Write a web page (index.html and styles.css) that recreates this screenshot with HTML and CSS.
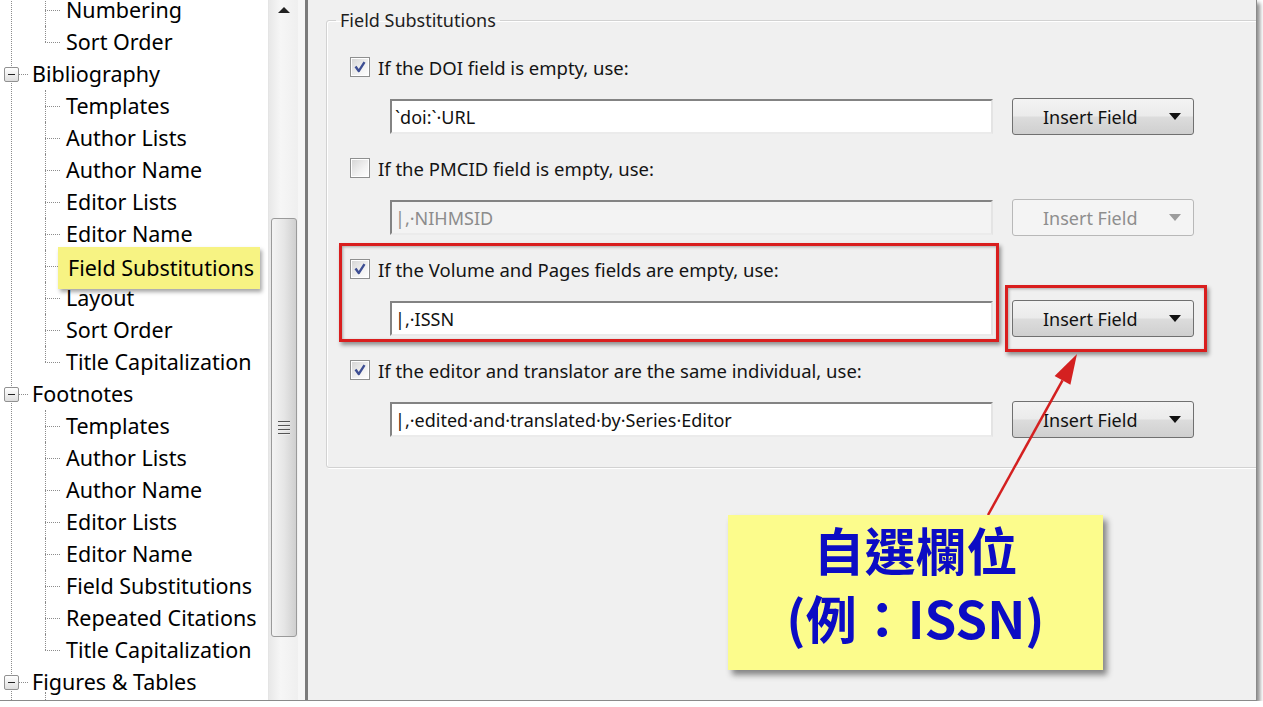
FILE: index.html
```html
<!DOCTYPE html>
<html lang="zh-Hant">
<head>
<meta charset="UTF-8">
<title>Field Substitutions</title>
<link rel="stylesheet" href="styles.css">
</head>
<body>
<div class="shot">
  <div class="tree-pane">
    <div class="tree">
      <div class="node child">Numbering</div>
      <div class="node child last">Sort Order</div>
      <div class="node parent"><span class="toggle"></span>Bibliography</div>
      <div class="node child">Templates</div>
      <div class="node child">Author Lists</div>
      <div class="node child">Author Name</div>
      <div class="node child">Editor Lists</div>
      <div class="node child">Editor Name</div>
      <div class="node child"><span class="hl">Field Substitutions</span></div>
      <div class="node child">Layout</div>
      <div class="node child">Sort Order</div>
      <div class="node child last">Title Capitalization</div>
      <div class="node parent"><span class="toggle"></span>Footnotes</div>
      <div class="node child">Templates</div>
      <div class="node child">Author Lists</div>
      <div class="node child">Author Name</div>
      <div class="node child">Editor Lists</div>
      <div class="node child">Editor Name</div>
      <div class="node child">Field Substitutions</div>
      <div class="node child">Repeated Citations</div>
      <div class="node child last">Title Capitalization</div>
      <div class="node parent open"><span class="toggle"></span>Figures &amp; Tables</div>
    </div>
    <div class="scrollbar">
      <span class="arrow-up"></span>
      <div class="thumb"><span class="grip"></span></div>
    </div>
  </div>
  <div class="splitter"></div>
  <div class="options">
    <fieldset class="group">
      <legend>Field Substitutions</legend>

      <div class="sub">
        <label class="opt"><span class="check"><svg viewBox="0 0 20 20"><path d="M5 9.5 L8.6 14.5 L15 4.5"/></svg></span>If the DOI field is empty, use:</label>
        <div class="field-row">
          <input class="field" type="text" value="`doi:`·URL">
          <button class="insert" type="button">Insert Field <span class="caret"></span></button>
        </div>
      </div>

      <div class="sub">
        <label class="opt"><span class="check"></span>If the PMCID field is empty, use:</label>
        <div class="field-row">
          <input class="field" type="text" value="|,·NIHMSID" disabled>
          <button class="insert" type="button" disabled>Insert Field <span class="caret"></span></button>
        </div>
      </div>

      <div class="sub">
        <label class="opt"><span class="check"><svg viewBox="0 0 20 20"><path d="M5 9.5 L8.6 14.5 L15 4.5"/></svg></span>If the Volume and Pages fields are empty, use:</label>
        <div class="field-row">
          <input class="field" type="text" value="|,·ISSN">
          <button class="insert" type="button">Insert Field <span class="caret"></span></button>
        </div>
      </div>

      <div class="sub">
        <label class="opt"><span class="check"><svg viewBox="0 0 20 20"><path d="M5 9.5 L8.6 14.5 L15 4.5"/></svg></span>If the editor and translator are the same individual, use:</label>
        <div class="field-row">
          <input class="field" type="text" value="|,·edited·and·translated·by·Series·Editor">
          <button class="insert" type="button">Insert Field <span class="caret"></span></button>
        </div>
      </div>
    </fieldset>
  </div>

  <!-- annotations drawn over the dialog -->
  <div class="mark mark-rule"></div>
  <div class="mark mark-button"></div>
  <svg class="pointer" viewBox="0 0 120 180">
    <line x1="18" y1="175" x2="92.5" y2="40.3"/>
    <polygon points="107,14 100.4,44.7 84.6,35.9"/>
  </svg>
  <div class="callout">
    <p>自選欄位</p>
    <p>(例：ISSN)</p>
  </div>
</div>
</body>
</html>
```

FILE: styles.css
```css
body {
    margin: 0;
    background-color: #fff;
    overflow: hidden;
}
.shot {
    position: relative;
    display: flex;
    width: 1256px;
    height: 700px;
    border-right: 1px solid #8a8a8a;
    border-bottom: 1px solid #8a8a8a;
    box-shadow: 3px 3px 4px rgba(0,0,0,0.45);
    overflow: hidden;
    font-family: "Noto Sans", "Open Sans", sans-serif;
    color: #141414;
}

/* tree on the left */
.tree-pane {
    display: flex;
    flex: none;
    width: 298px;
    height: 700px;
    background-color: #fff;
    overflow: hidden;
}
.tree {
    position: relative;
    width: 268px;
    margin-top: -6px;
    font-size: 21.5px;
    color: #000;
}
.tree::before {
    content: "";
    position: absolute;
    left: 11px;
    top: 0;
    bottom: -20px;
    border-left: 1px dotted #8c8c8c;
}
.node {
    position: relative;
    height: 32px;
    line-height: 32px;
    white-space: nowrap;
}
.node.parent {
    padding-left: 32px;
}
.node.parent::before {
    content: "";
    position: absolute;
    left: 18px;
    top: 16px;
    width: 10px;
    border-top: 1px dotted #8c8c8c;
}
.node.parent.open::after {
    content: "";
    position: absolute;
    left: 45px;
    top: 26px;
    height: 8px;
    border-left: 1px dotted #8c8c8c;
}
.node.child {
    padding-left: 66px;
}
.node.child::before {
    content: "";
    position: absolute;
    left: 45px;
    top: 16px;
    width: 15px;
    border-top: 1px dotted #8c8c8c;
}
.node.child::after {
    content: "";
    position: absolute;
    left: 45px;
    top: 0;
    height: 32px;
    border-left: 1px dotted #8c8c8c;
}
.node.child.last::after {
    height: 16px;
}
.toggle {
    position: absolute;
    left: 4px;
    top: 9px;
    width: 13px;
    height: 13px;
    border: 1px solid #919191;
    border-radius: 2px;
    background: linear-gradient(#ffffff, #dedede);
    z-index: 1;
}
.toggle::after {
    content: "";
    position: absolute;
    left: 3px;
    top: 6px;
    width: 7px;
    height: 1px;
    background-color: #222;
}
.hl {
    position: relative;
    top: 2px;
    display: inline-block;
    line-height: 32px;
    padding: 5px 6px 5px 10px;
    margin: -5px 0 -5px -8px;
    background-color: #f7f383;
    box-shadow: 2px 3px 4px rgba(0,0,0,0.35);
    z-index: 2;
}

/* scrollbar */
.scrollbar {
    display: flex;
    flex-direction: column;
    align-items: center;
    width: 30px;
    box-sizing: border-box;
    padding-top: 7px;
    border-left: 1px solid #e4e4e4;
    background: linear-gradient(90deg, #e8e8e8, #f6f6f6 40%, #efefef);
}
.arrow-up {
    width: 0;
    height: 0;
    border-left: 6px solid transparent;
    border-right: 6px solid transparent;
    border-bottom: 6px solid #222;
}
.thumb {
    display: flex;
    align-items: center;
    justify-content: center;
    width: 26px;
    height: 419px;
    margin-top: 205px;
    box-sizing: border-box;
    border: 1px solid #9a9a9a;
    border-radius: 3px;
    background: linear-gradient(90deg, #f4f4f4, #e6e6e6 50%, #cfcfcf);
}
.grip {
    width: 12px;
    height: 14px;
    background: repeating-linear-gradient(#555 0 1px, #eee 1px 2px, transparent 2px 4px);
}
.splitter {
    flex: none;
    width: 7px;
    background-color: #f6f6f6;
}

/* options on the right */
.options {
    flex: 1;
    padding-top: 8px;
    border-left: 3px solid #7b7b7b;
    background-color: #f0f0f0;
    overflow: hidden;
}
.group {
    margin: 0 -10px 0 18px;
    padding: 20px 0 29px 9px;
    min-width: 0;
    border: 1px solid #d2d2d2;
    border-radius: 3px;
    box-shadow: inset 1px 1px 0 #fff, 1px 1px 0 #fff;
}
.group legend {
    padding: 0 4px;
    font-size: 18px;
    line-height: 24px;
    color: #1e1e1e;
}
.sub {
    padding-left: 14px;
}
.sub + .sub {
    margin-top: 18px;
}
.opt {
    display: flex;
    align-items: center;
    gap: 8px;
    height: 30px;
    font-size: 18.5px;
}
.check {
    display: flex;
    width: 20px;
    height: 20px;
    box-sizing: border-box;
    border: 1px solid #8e8f8f;
    background: linear-gradient(135deg, #d4d4d4, #f2f2f2 60%, #ffffff);
    box-shadow: inset 0 0 0 1px #fff;
}
.check svg {
    width: 18px;
    height: 18px;
}
.check path {
    fill: none;
    stroke: #3d4e93;
    stroke-width: 2.6;
    stroke-linejoin: round;
}
.field-row {
    display: flex;
    align-items: center;
    gap: 19px;
    height: 37px;
    margin-top: 16px;
    padding-left: 40px;
}
.field {
    width: 603px;
    height: 35px;
    box-sizing: border-box;
    padding: 0 3px;
    border: 2px solid;
    border-color: #838383 #e4e4e4 #ebebeb #838383;
    background-color: #fff;
    font-family: "Noto Sans", sans-serif;
    font-size: 18px;
    color: #111;
}
.field:disabled {
    background-color: #f3f3f3;
    color: #8c8c8c;
}
.insert {
    display: flex;
    align-items: center;
    justify-content: space-between;
    width: 182px;
    height: 37px;
    padding: 0 12px 0 30px;
    border: 1px solid #707070;
    border-radius: 3px;
    background: linear-gradient(#f3f3f3, #ebebeb 48%, #dcdcdc 52%, #cfcfcf);
    font-family: "Noto Sans", sans-serif;
    font-size: 18px;
    color: #111;
}
.caret {
    width: 0;
    height: 0;
    border-left: 6.5px solid transparent;
    border-right: 6.5px solid transparent;
    border-top: 7px solid #111;
}
.insert:disabled {
    border-color: #b8b8b8;
    background: #f4f4f4;
    color: #8e8e8e;
}
.insert:disabled .caret {
    border-top-color: #9c9c9c;
}

/* annotations */
.mark {
    position: absolute;
    box-sizing: border-box;
    border: 3px solid #d91e1e;
    box-shadow: 2px 3px 4px rgba(0,0,0,0.4), inset 1px 1px 3px rgba(0,0,0,0.3);
}
.mark-rule {
    left: 339px;
    top: 243px;
    width: 660px;
    height: 99px;
}
.mark-button {
    left: 1005px;
    top: 285px;
    width: 202px;
    height: 67px;
}
.pointer {
    position: absolute;
    left: 970px;
    top: 340px;
    width: 120px;
    height: 180px;
}
.pointer line {
    stroke: #d42020;
    stroke-width: 2.5;
}
.pointer polygon {
    fill: #d42020;
}
.callout {
    position: absolute;
    left: 728px;
    top: 515px;
    width: 375px;
    height: 155px;
    box-sizing: border-box;
    padding-top: 0;
    background-color: #fcfc8c;
    box-shadow: 4px 5px 6px rgba(0,0,0,0.45);
    text-align: center;
    font-family: "Noto Sans CJK TC", sans-serif;
    font-weight: 700;
    font-size: 51px;
    line-height: 68px;
    color: #0c0cc4;
}
.callout p {
    margin: 0;
}
```
